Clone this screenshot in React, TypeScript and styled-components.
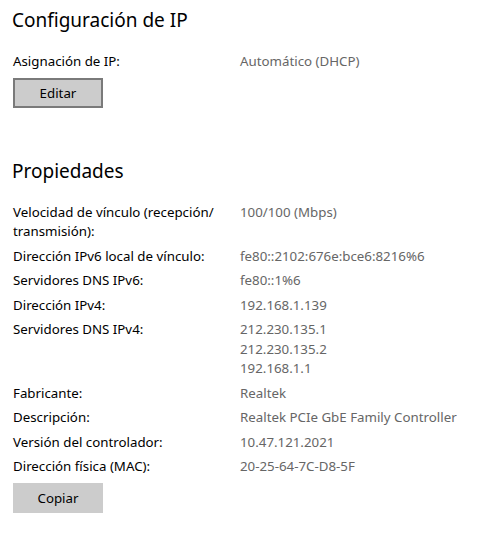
import React from "react";
import styled, { createGlobalStyle } from "styled-components";

const Global = createGlobalStyle`
  html, body { margin: 0; padding: 0; background: #ffffff; }
  body { font-family: "Noto Sans", "Open Sans", sans-serif; color: #000; }
`;

const Page = styled.div`
  padding: 6px 13px 10px 13px;
  display: flex;
  flex-direction: column;
  gap: 49px;
`;

const Section = styled.section`
  display: flex;
  flex-direction: column;
`;

const Heading = styled.h2`
  margin: 0 0 18px -1px;
  font-size: 19px;
  line-height: 28px;
  font-weight: 400;
`;

const List = styled.div`
  display: flex;
  flex-direction: column;
  gap: 5px;
`;

const Row = styled.div`
  display: grid;
  grid-template-columns: 227px 1fr;
  font-size: 13.3px;
  line-height: 19.5px;
`;

const Label = styled.div`
  color: #000;
  padding-right: 10px;
`;

const Value = styled.div`
  color: #666666;
  display: flex;
  flex-direction: column;
`;

const Button = styled.button<{ $focused?: boolean }>`
  margin-top: 6px;
  width: 90px;
  height: 30px;
  box-sizing: border-box;
  background: #cccccc;
  border: 2px solid ${(p) => (p.$focused ? "#7a7a7a" : "transparent")};
  font-family: inherit;
  font-size: 13.3px;
  color: #000;
  padding: 0;
  cursor: pointer;
`;

const props: { label: string; values: string[] }[] = [
  { label: "Velocidad de vínculo (recepción/ transmisión):", values: ["100/100 (Mbps)"] },
  { label: "Dirección IPv6 local de vínculo:", values: ["fe80::2102:676e:bce6:8216%6"] },
  { label: "Servidores DNS IPv6:", values: ["fe80::1%6"] },
  { label: "Dirección IPv4:", values: ["192.168.1.139"] },
  { label: "Servidores DNS IPv4:", values: ["212.230.135.1", "212.230.135.2", "192.168.1.1"] },
  { label: "Fabricante:", values: ["Realtek"] },
  { label: "Descripción:", values: ["Realtek PCIe GbE Family Controller"] },
  { label: "Versión del controlador:", values: ["10.47.121.2021"] },
  { label: "Dirección física (MAC):", values: ["20-25-64-7C-D8-5F"] },
];

export default function App() {
  return (
    <>
      <Global />
      <Page>
        <Section>
          <Heading>Configuración de IP</Heading>
          <List>
            <Row>
              <Label>Asignación de IP:</Label>
              <Value>
                <span>Automático (DHCP)</span>
              </Value>
            </Row>
          </List>
          <div>
            <Button $focused>Editar</Button>
          </div>
        </Section>
        <Section>
          <Heading>Propiedades</Heading>
          <List>
            {props.map((p) => (
              <Row key={p.label}>
                <Label>{p.label}</Label>
                <Value>
                  {p.values.map((v) => (
                    <span key={v}>{v}</span>
                  ))}
                </Value>
              </Row>
            ))}
          </List>
          <div>
            <Button>Copiar</Button>
          </div>
        </Section>
      </Page>
    </>
  );
}
